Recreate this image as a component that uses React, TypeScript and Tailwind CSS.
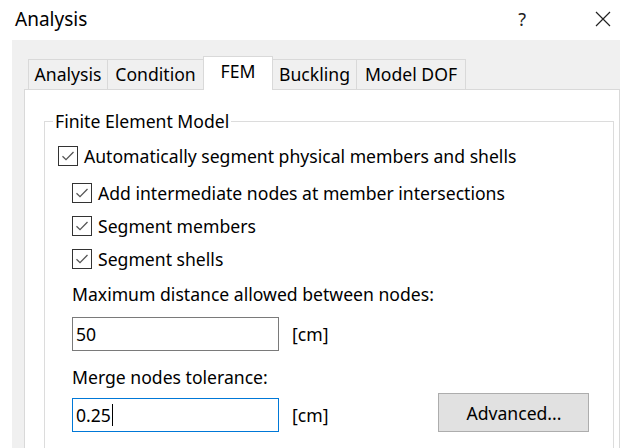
import { useState } from 'react';

// Analysis settings dialog, FEM tab
const TABS = [
  { name: 'Analysis', w: 'w-[80px]' },
  { name: 'Condition', w: 'w-[97px]' },
  { name: 'FEM', w: 'w-[70px]' },
  { name: 'Buckling', w: 'w-[85px]' },
  { name: 'Model DOF', w: 'w-[110px]' },
];

function CheckBox({ checked, label, onToggle }: { checked: boolean; label: string; onToggle: () => void }) {
  return (
    <label className="flex items-center gap-[6px] h-[24px] cursor-default select-none" onClick={onToggle}>
      <span className="w-[20px] h-[20px] border border-[#333333] bg-white flex items-center justify-center shrink-0">
        {checked && (
          <svg width="14" height="14" viewBox="0 0 14 14" fill="none">
            <path d="M1.5 7.2 L5 10.6 L12.5 3" stroke="#555555" strokeWidth="1.3" />
          </svg>
        )}
      </span>
      <span>{label}</span>
    </label>
  );
}

export default function App() {
  const [auto, setAuto] = useState(true);
  const [nodes, setNodes] = useState(true);
  const [members, setMembers] = useState(true);
  const [shells, setShells] = useState(true);

  return (
    <div className="w-[620px] h-[448px] overflow-hidden bg-white text-black font-['Noto_Sans',sans-serif] text-[17.6px] leading-[24px]">
      {/* title bar */}
      <div className="h-[40px] flex items-center pl-[15px]">
        <span className="text-[19px] leading-none pb-[2px]">Analysis</span>
        <span className="ml-auto text-[18px] leading-none text-[#222] mr-[69px] pb-[2px]">?</span>
        <svg className="mr-[9px] mb-[2px]" width="16" height="16" viewBox="0 0 16 16">
          <path d="M1 1 L15 15 M15 1 L1 15" stroke="#222" strokeWidth="1.2" />
        </svg>
      </div>

      {/* dialog body */}
      <div className="ml-[12px] h-[408px] bg-[#f0f0f0] pt-[16px] pl-[12px]">
        <div className="flex items-end pl-[4px] h-[33px] relative z-10">
          {TABS.map((t, i) =>
            t.name === 'FEM' ? (
              <div
                key={t.name}
                className={`${t.w} h-[34px] bg-white border border-b-0 border-[#d9d9d9] -ml-[1px] mb-[-1px] flex justify-center pt-[2px] leading-[24px]`}
              >
                {t.name}
              </div>
            ) : (
              <div
                key={t.name}
                className={`${t.w} h-[30px] border border-b-0 border-[#d9d9d9] ${i === 0 ? '' : '-ml-[1px]'} flex items-center justify-center pb-[1px]`}
              >
                {t.name}
              </div>
            )
          )}
        </div>

        {/* tab page */}
        <div className="bg-white border border-[#d9d9d9] h-[400px] pl-[19px] pt-[20px]">
          <fieldset className="border border-[#dcdcdc] w-[570px] h-[340px] pl-[13px]">
            <legend className="-ml-[5px] px-[2px] leading-[22px]">Finite Element Model</legend>

            <div className="mt-[12px]">
              <CheckBox
                checked={auto}
                label="Automatically segment physical members and shells"
                onToggle={() => setAuto(!auto)}
              />
            </div>
            <div className="pl-[14px] mt-[13px] flex flex-col">
              <CheckBox
                checked={nodes}
                label="Add intermediate nodes at member intersections"
                onToggle={() => setNodes(!nodes)}
              />
              <div className="mt-[9px]">
                <CheckBox checked={members} label="Segment members" onToggle={() => setMembers(!members)} />
              </div>
              <div className="mt-[9px]">
                <CheckBox checked={shells} label="Segment shells" onToggle={() => setShells(!shells)} />
              </div>

              <div className="mt-[11px]">Maximum distance allowed between nodes:</div>
              <div className="flex items-center mt-[11px]">
                <div className="w-[207px] h-[34px] border border-[#7a7a7a] flex items-center pl-[3px]">50</div>
                <span className="ml-[13px]">[cm]</span>
              </div>

              <div className="mt-[14px]">Merge nodes tolerance:</div>
              <div className="flex items-end mt-[4px]">
                <div className="w-[207px] h-[34px] border border-[#0078d7] flex items-center pl-[3px]">
                  0.25<span className="inline-block w-[1px] h-[22px] bg-black ml-[1px]" />
                </div>
                <span className="ml-[13px] h-[34px] flex items-center">[cm]</span>
                <button className="ml-[110px] w-[151px] h-[39px] bg-[#e1e1e1] border border-[#adadad]">
                  Advanced...
                </button>
              </div>
            </div>
          </fieldset>
        </div>
      </div>
    </div>
  );
}
